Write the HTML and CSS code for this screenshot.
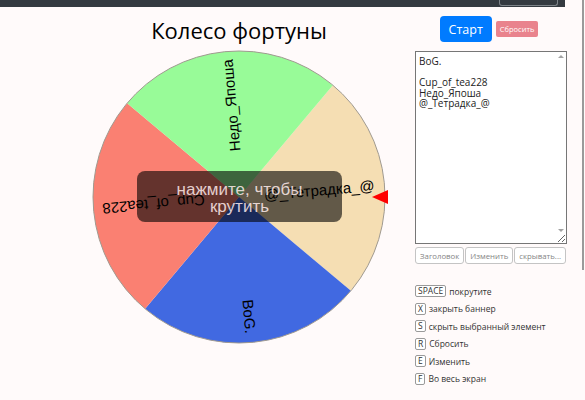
FILE: index.html
```html
<!DOCTYPE html>
<html lang="ru">
<head>
  <meta charset="UTF-8" />
  <meta name="viewport" content="width=device-width, initial-scale=1" />
  <title>Колесо фортуны</title>
  <link rel="stylesheet" href="styles.css">
</head>
<body>
  <div class="page">
    <div class="topbar"><span class="topbar-btn"></span></div>

    <div class="layout">
      <div class="wheel-col">
        <h1>Колесо фортуны</h1>
        <div class="wheel">
          <svg width="300" height="300" viewBox="0 0 300 300">
            <path d="M150,150 L243.85,38.16 A146,146 0 0 1 261.84,243.85 Z" fill="#f5deb3" />
            <path d="M150,150 L261.84,243.85 A146,146 0 0 1 56.15,261.84 Z" fill="#4169e1" />
            <path d="M150,150 L56.15,261.84 A146,146 0 0 1 38.16,56.15 Z" fill="#fa8072" />
            <path d="M150,150 L38.16,56.15 A146,146 0 0 1 243.85,38.16 Z" fill="#98fb98" />
            <circle cx="150" cy="150" r="146" fill="none" stroke="#a09a90" stroke-width="1" />
            <g class="labels">
              <text x="286" y="150" transform="rotate(355 150 150)">@_Тетрадка_@</text>
              <text x="287" y="150" transform="rotate(85 150 150)">BoG.</text>
              <text x="287" y="150" transform="rotate(175 150 150)">Cup_of_tea228</text>
              <text x="288" y="150" transform="rotate(265 150 150)">Недо_Япоша</text>
            </g>
            <polygon points="283,150 299,143 299,157" fill="#ff0000" />
          </svg>
          <div class="banner">нажмите, чтобы<br>крутить</div>
        </div>
      </div>

      <div class="side">
        <div class="actions">
          <button class="btn-start">Старт</button>
          <button class="btn-reset">Сбросить</button>
        </div>

        <div class="names">
          <textarea spellcheck="false">BoG.

Cup_of_tea228
Недо_Япоша
@_Тетрадка_@</textarea>
          <span class="arrow up"></span>
          <span class="arrow down"></span>
        </div>

        <div class="tools">
          <button>Заголовок</button>
          <button>Изменить</button>
          <button>скрывать...</button>
        </div>

        <ul class="keys">
          <li><kbd>SPACE</kbd> покрутите</li>
          <li><kbd>X</kbd> закрыть баннер</li>
          <li><kbd>S</kbd> скрыть выбранный элемент</li>
          <li><kbd>R</kbd> Сбросить</li>
          <li><kbd>E</kbd> Изменить</li>
          <li><kbd>F</kbd> Во весь экран</li>
        </ul>
      </div>
    </div>
  </div>
  <div class="edge"></div>
</body>
</html>
```

FILE: styles.css
```css
html, body {
  margin: 0;
  padding: 0;
  background: #fffafa;
  font-family: 'Open Sans', 'Noto Sans', sans-serif;
  color: #212529;
  overflow: hidden;
}
body {
  display: flex;
  align-items: flex-start;
}
.page {
  width: 567px;
}
.edge {
  width: 2px;
  height: 270px;
  margin-left: 15px;
  background: #9a9a9a;
}
.topbar {
  width: 565px;
  height: 7px;
  background: #343a40;
  display: flex;
  justify-content: flex-end;
}
.topbar-btn {
  width: 57px;
  height: 5px;
  margin-right: 7px;
  border: 1px solid #7d8388;
  border-top: none;
  border-radius: 0 0 3px 3px;
}
.layout {
  display: flex;
}
.wheel-col {
  width: 352px;
  padding-left: 63px;
  text-align: center;
}
h1 {
  margin: 10px 0 0;
  font-size: 22px;
  line-height: 26px;
  font-weight: 500;
  color: #000;
}
.wheel {
  position: relative;
  width: 300px;
  height: 300px;
  margin: 4px auto 0;
}
.wheel svg {
  display: block;
}
.labels text {
  font-family: 'Liberation Sans', Arial, sans-serif;
  font-size: 15px;
  fill: #000;
  text-anchor: end;
  dominant-baseline: central;
}
.banner {
  position: absolute;
  left: 48px;
  top: 124px;
  width: 205px;
  height: 51px;
  border-radius: 8px;
  background: rgba(0, 0, 0, 0.6);
  color: rgba(255, 236, 236, 0.85);
  font-family: 'Liberation Sans', Arial, sans-serif;
  font-size: 17px;
  line-height: 17px;
  display: flex;
  align-items: center;
  justify-content: center;
  padding-top: 2px;
  box-sizing: border-box;
}
.side {
  width: 152px;
}
.actions {
  display: flex;
  justify-content: center;
  align-items: center;
  gap: 4px;
  margin-top: 9px;
  padding-right: 4px;
}
.actions button {
  font-family: inherit;
  border: none;
  color: #fff;
  cursor: pointer;
}
.btn-start {
  height: 26px;
  padding: 0 9px;
  background: #007bff;
  border-radius: 4px;
  font-size: 12.5px;
}
.btn-reset {
  height: 16px;
  padding: 0 4px;
  background: #dc3545;
  opacity: 0.6;
  border-radius: 2px;
  font-size: 7.5px;
}
.names {
  position: relative;
  margin-top: 9px;
  height: 193px;
}
.names textarea {
  display: block;
  width: 152px;
  height: 193px;
  box-sizing: border-box;
  margin: 0;
  padding: 4px 3px;
  border: 1px solid #767676;
  border-radius: 0;
  background: #fff;
  font-family: 'Open Sans', 'Noto Sans', sans-serif;
  font-size: 10px;
  line-height: 10.5px;
  color: #222;
  outline: none;
}
.arrow {
  position: absolute;
  right: 3px;
  width: 0;
  height: 0;
  border-left: 3px solid transparent;
  border-right: 3px solid transparent;
}
.arrow.up {
  top: 4px;
  border-bottom: 3px solid #a3a3a3;
}
.arrow.down {
  bottom: 12px;
  border-top: 3px solid #a3a3a3;
}
.tools {
  display: flex;
  justify-content: space-between;
  margin-top: 3px;
  padding-right: 1px;
}
.tools button {
  height: 17px;
  padding: 0 4px;
  background: #fff;
  border: 1px solid #c4c4c4;
  border-radius: 3px;
  color: #858585;
  font-family: inherit;
  font-size: 7.8px;
}
.keys {
  list-style: none;
  margin: 21px 0 0;
  padding: 0;
  display: flex;
  flex-direction: column;
  gap: 5.5px;
}
.keys li {
  display: flex;
  align-items: center;
  gap: 3px;
  height: 12px;
  font-size: 8.5px;
  color: #333;
}
kbd {
  min-width: 8px;
  height: 12px;
  box-sizing: border-box;
  padding: 0 2px;
  border: 1px solid #9a9a9a;
  border-radius: 2px;
  background: #fff;
  font-family: 'Open Sans', 'Noto Sans', sans-serif;
  font-size: 8.5px;
  line-height: 10px;
  text-align: center;
  color: #333;
}
```
